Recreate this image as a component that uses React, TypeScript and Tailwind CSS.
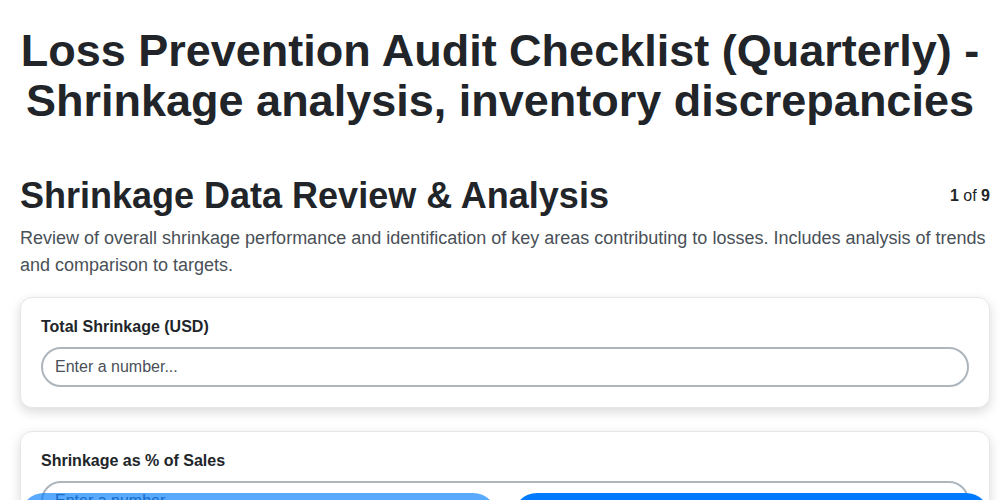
const questions = [
  { id: 'total-shrinkage', label: 'Total Shrinkage (USD)' },
  { id: 'shrinkage-pct', label: 'Shrinkage as % of Sales' },
  { id: 'shrinkage-target', label: 'Shrinkage Target (%)' },
];

function QuestionCard({ id, label }: { id: string; label: string }) {
  return (
    <div className="rounded-xl border border-[#e5e7eb] bg-white px-5 pb-5 pt-[17px] shadow-[0_4px_12px_rgba(0,0,0,0.15)]">
      <label htmlFor={id} className="mb-2 block text-base font-bold text-[#212529]">
        {label}
      </label>
      <input
        id={id}
        type="number"
        placeholder="Enter a number..."
        className="block h-10 w-full rounded-full border-2 border-[#adb5bd] bg-white px-3 text-base text-[#212529] placeholder:text-[#495057] outline-none"
      />
    </div>
  );
}

export default function App() {
  return (
    <div className="h-screen overflow-hidden bg-white font-['Liberation_Sans',Arial,sans-serif] text-[#212529]">
      <div className="px-5 pt-[26px]">
        <h1 className="text-center text-[45px] font-bold leading-[50px]">
          Loss Prevention Audit Checklist (Quarterly) - Shrinkage analysis, inventory discrepancies
        </h1>
      </div>

      <div className="pb-24 pl-5 pr-[10px]">
        <div className="mt-12 flex items-center justify-between">
          <h2 className="text-[36px] font-bold leading-[1.2]">Shrinkage Data Review &amp; Analysis</h2>
          <span className="text-base">
            <b>1</b> of <b>9</b>
          </span>
        </div>
        <p className="mt-2 text-lg leading-[1.5] text-[#495057]">
          Review of overall shrinkage performance and identification of key areas contributing to losses. Includes
          analysis of trends and comparison to targets.
        </p>

        <div className="mt-[18px] flex flex-col gap-[23px]">
          {questions.map((q) => (
            <QuestionCard key={q.id} {...q} />
          ))}
        </div>
      </div>

      {/* bottom nav, only its top edge is inside the window */}
      <div className="fixed inset-x-0 bottom-0 h-[7px] overflow-hidden pl-5 pr-[10px]">
        <div className="grid grid-cols-2 gap-4">
          <button
            disabled
            className="rounded-full bg-[#007bff] py-3 text-base font-bold text-white opacity-65"
          >
            Previous
          </button>
          <button className="rounded-full bg-[#007bff] py-3 text-base font-bold text-white">Next</button>
        </div>
      </div>
    </div>
  );
}
